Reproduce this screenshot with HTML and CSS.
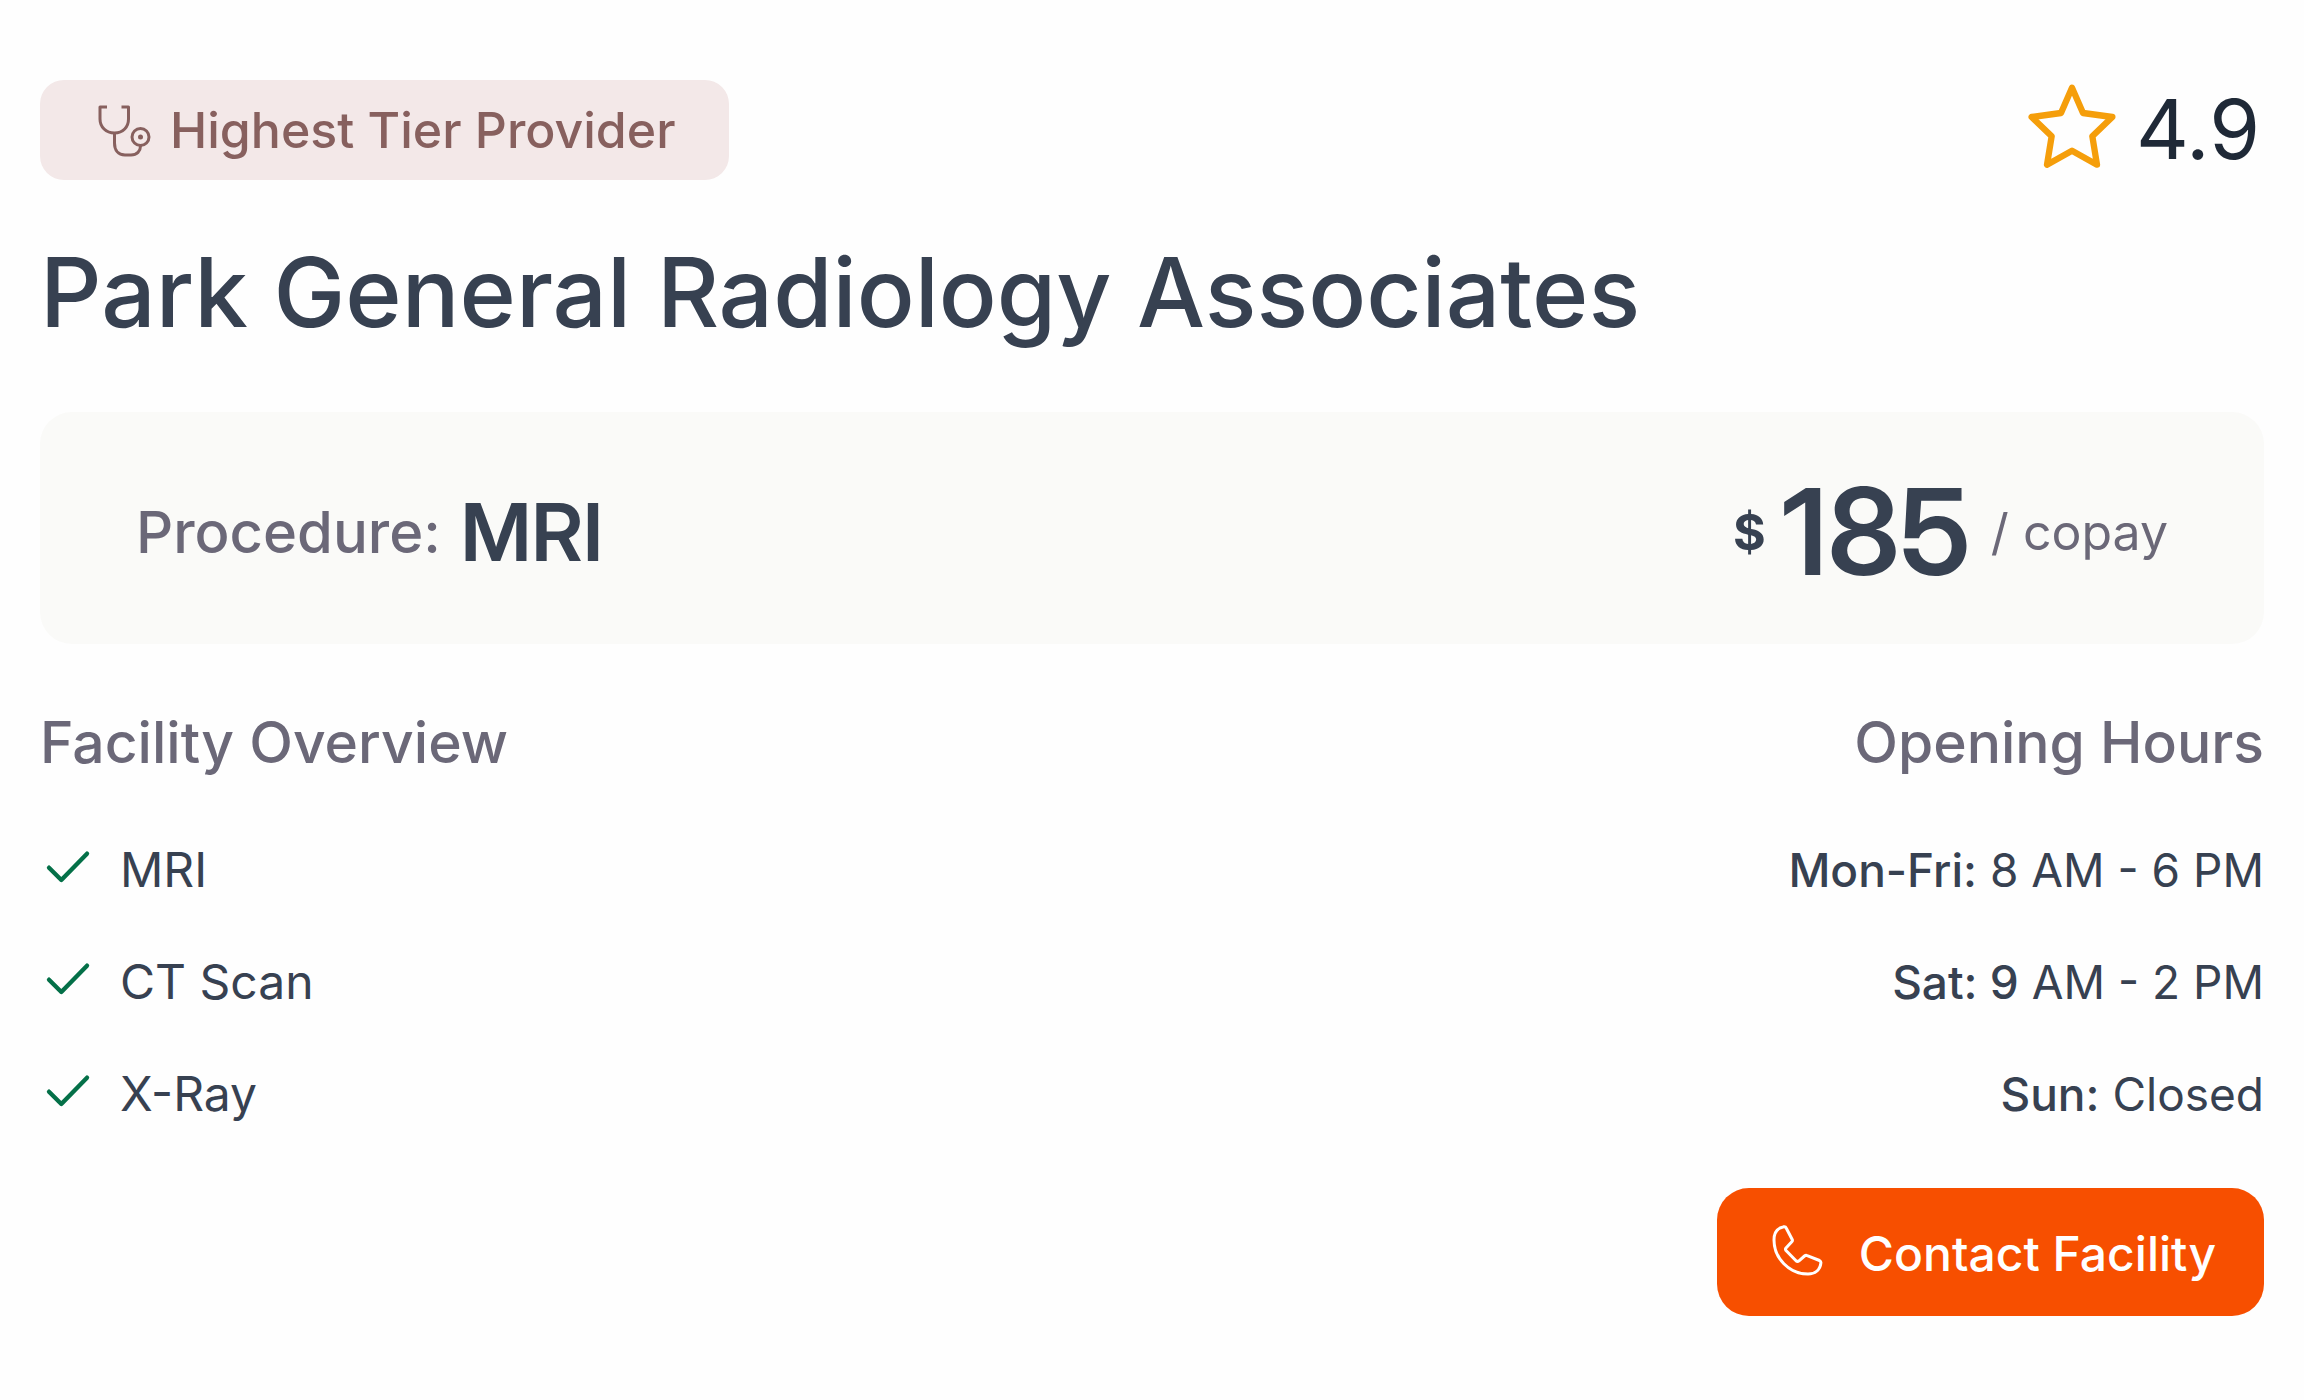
FILE: index.html
```html
<!DOCTYPE html>
<html lang="en">
<head>
<meta charset="utf-8">
<meta name="viewport" content="width=device-width, initial-scale=1">
<title>Park General Radiology Associates</title>
<link rel="stylesheet" href="styles.css">
</head>
<body>
<main class="card">
  <header class="card-top">
    <p class="badge">
      <svg class="badge-icon" viewBox="0 -1 52 52" aria-hidden="true">
        <path d="M9 2H2V14C2 22 8 28 16.500 28C25 28 30.500 22 30.500 14V2H23.500"/>
        <path d="M16.500 28V38C16.500 45 20 50 27 50H33C39 50 42.500 46 42.500 41"/>
        <circle cx="42.500" cy="32" r="8.500"/>
        <circle class="dot" cx="42.500" cy="32" r="2.500"/>
      </svg>
      Highest Tier Provider
    </p>
    <p class="rating">
      <svg class="star" viewBox="108 30 270 300" aria-hidden="true">
        <path d="M246 53L279 129L367 141L307 199L321 284L246 242L171 284L185 199L125 141L213 129Z"/>
      </svg>
      4.9
    </p>
  </header>

  <h1 class="name">Park General Radiology Associates</h1>

  <section class="procedure">
    <p class="procedure-name"><span class="label">Procedure:</span><span class="value">MRI</span></p>
    <p class="price"><span class="currency">$</span><span class="amount">185</span><span class="unit">/ copay</span></p>
  </section>

  <div class="details">
    <section class="overview">
      <h2 class="heading">Facility Overview</h2>
      <ul class="list">
        <li class="service"><svg class="check" viewBox="30 36 168 168" aria-hidden="true"><path d="M57 113L94 150L171 71"/></svg>MRI</li>
        <li class="service"><svg class="check" viewBox="30 36 168 168" aria-hidden="true"><path d="M57 113L94 150L171 71"/></svg>CT Scan</li>
        <li class="service"><svg class="check" viewBox="30 36 168 168" aria-hidden="true"><path d="M57 113L94 150L171 71"/></svg>X-Ray</li>
      </ul>
    </section>
    <section class="hours">
      <h2 class="heading">Opening Hours</h2>
      <ul class="list times">
        <li><span class="day">Mon-Fri:</span> 8 AM - 6 PM</li>
        <li><span class="day">Sat: 9</span> AM - 2 PM</li>
        <li><span class="day">Sun:</span> Closed</li>
      </ul>
      <button class="contact" type="button">
        <svg class="phone" viewBox="1 3 52 52" aria-hidden="true">
          <path d="M8 3L11.500 1.800Q13.500 1.300 14.300 3.200L20.200 14.500Q20.800 15.800 19.800 16.800L14 23Q13 24.200 14 25.500L24 35.800Q25.500 37 27 35.800L32.500 31Q33.800 30 35.200 30.600L47.500 35.500Q49.300 36.500 48.800 38.500C48 45 43 49 36 49C17 49 2 33 2 15C2 9 4 5 8 3Z"/>
        </svg>
        Contact Facility
      </button>
    </section>
  </div>
</main>
</body>
</html>
```
FILE: styles.css
```css
* { box-sizing: border-box; }

body {
  margin: 0;
  background: #fefefe;
  color: #374151;
  font-family: Inter, "Liberation Sans", sans-serif;
}

h1, h2, p, ul { margin: 0; padding: 0; }
ul { list-style: none; }
svg { flex: none; overflow: visible; fill: none; stroke: currentColor; stroke-linecap: round; stroke-linejoin: round; }

.card { padding: 80px 40px 84px; }

.card-top { display: flex; justify-content: space-between; align-items: center; }

.badge {
  display: flex;
  align-items: center;
  gap: 20px;
  padding: 20px 54px 20px 58px;
  border-radius: 24px;
  background: #f3e8e8;
  color: #87605e;
  font-size: 50px;
  font-weight: 500;
  line-height: 60px;
}
.badge-icon { width: 52px; height: 52px; stroke-width: 3; stroke-linecap: butt; }
.dot { fill: currentColor; stroke: none; }

.rating {
  display: flex;
  align-items: center;
  gap: 20px;
  padding-right: 4px;
  color: #1f2937;
  font-size: 82px;
  line-height: 100px;
}
.star { width: 90px; height: 100px; color: #f59e0b; stroke-width: 19; }

.name { margin-top: 54px; font-size: 96px; font-weight: 500; line-height: 116px; }

.procedure {
  display: flex;
  justify-content: space-between;
  align-items: center;
  margin-top: 62px;
  padding: 50px 96px 42px;
  border-radius: 32px;
  background: #fafaf8;
  line-height: 140px;
}
.procedure-name, .price { display: flex; align-items: center; }
.label { margin-right: 20px; color: #6b6878; font-size: 58px; font-weight: 500; }
.value { font-family: "Inter Display", Inter, sans-serif; font-size: 80px; font-weight: 600; }
.currency { margin-right: 16px; font-size: 50px; font-weight: 700; }
.amount { margin-right: 20px; font-family: "Inter Display", Inter, sans-serif; font-size: 120px; font-weight: 600; }
.unit { color: #6b6878; font-size: 50px; }

.details { display: flex; justify-content: space-between; margin-top: 63px; }
.heading { color: #6b6878; font-size: 57px; font-weight: 500; line-height: 72px; }
.list { display: flex; flex-direction: column; gap: 56px; margin-top: 63px; font-size: 48px; line-height: 56px; }
.times { font-size: 46px; }
.service { display: flex; align-items: center; gap: 24px; }
.check { width: 56px; height: 56px; color: #047048; stroke-width: 13; }
.hours { display: flex; flex-direction: column; align-items: flex-end; text-align: right; }
.day { font-weight: 500; }

.contact {
  display: flex;
  align-items: center;
  gap: 34px;
  margin-top: 66px;
  padding: 34px 48px 30px 56px;
  border: 0;
  border-radius: 32px;
  background: #f74f00;
  color: #fff;
  font: 500 48px/64px Inter, "Liberation Sans", sans-serif;
  cursor: pointer;
}
.phone { width: 52px; height: 52px; stroke-width: 3; }
```
